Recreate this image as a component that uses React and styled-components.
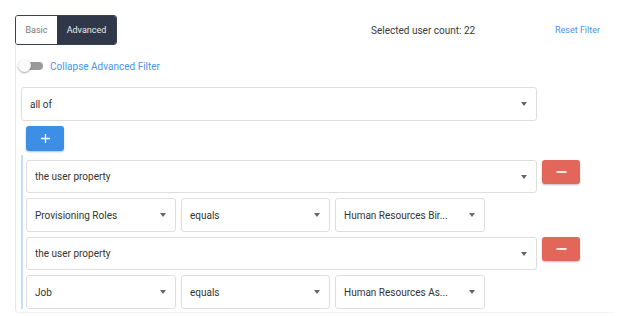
import styled, { createGlobalStyle } from "styled-components";

const Global = createGlobalStyle`
  body {
    margin: 0;
    background: #fff;
    font-family: Roboto, "Liberation Sans", Arial, sans-serif;
    color: #333;
  }
`;

export default function App() {
  const conditions = [
    { field: "Provisioning Roles", op: "equals", value: "Human Resources Bir..." },
    { field: "Job", op: "equals", value: "Human Resources As..." },
  ];

  return (
    <>
      <Global />
      <Page>
        <TopRow>
          <Tabs>
            <Tab>Basic</Tab>
            <Tab active>Advanced</Tab>
          </Tabs>
          <Count>Selected user count: 22</Count>
          <Link small>Reset Filter</Link>
        </TopRow>

        <Card>
          <ToggleRow>
            <Switch>
              <Thumb />
            </Switch>
            <Link>Collapse Advanced Filter</Link>
          </ToggleRow>

          <Select width={516} height={34}>
            <span>all of</span>
            <Caret />
          </Select>

          <AddButton>
            <svg width="11" height="11" viewBox="0 0 11 11">
              <path d="M5.5 1v9M1 5.5h9" stroke="#fff" strokeWidth="1.3" />
            </svg>
          </AddButton>

          <Group>
            {conditions.map((c, i) => (
              <Condition key={i}>
                <ConditionHead>
                  <Select width={511} height={33}>
                    <span>the user property</span>
                    <Caret />
                  </Select>
                  <RemoveButton>
                    <svg width="11" height="4" viewBox="0 0 11 4">
                      <path d="M0.5 2h10" stroke="#fde8e5" strokeWidth="2" />
                    </svg>
                  </RemoveButton>
                </ConditionHead>
                <SubRow>
                  <Select width={150} height={34}>
                    <span>{c.field}</span>
                    <Caret />
                  </Select>
                  <Select width={149} height={34}>
                    <span>{c.op}</span>
                    <Caret />
                  </Select>
                  <Select width={150} height={34}>
                    <span>{c.value}</span>
                    <Caret />
                  </Select>
                </SubRow>
              </Condition>
            ))}
          </Group>
        </Card>
      </Page>
    </>
  );
}

const Page = styled.div`
  width: 622px;
  padding: 15px 0 0 15px;
  box-sizing: border-box;
`;

const TopRow = styled.div`
  display: flex;
  align-items: center;
  height: 30px;
  padding-right: 22px;
`;

const Tabs = styled.div`
  display: flex;
  height: 30px;
  border: 1px solid #3a4150;
  border-radius: 3px;
  overflow: hidden;
  box-sizing: border-box;
`;

const Tab = styled.div`
  display: flex;
  align-items: center;
  justify-content: center;
  width: ${({ active }) => (active ? "59px" : "41px")};
  box-sizing: border-box;
  font-size: 9px;
  color: ${({ active }) => (active ? "#e8eaee" : "#777")};
  background: ${({ active }) => (active ? "#2f3748" : "#fff")};
`;

const Count = styled.div`
  margin-left: 254px;
  font-size: 10px;
  color: #3a3a3a;
`;

const Link = styled.div`
  color: #4a94e8;
  font-size: ${({ small }) => (small ? "9px" : "10px")};
  margin-left: ${({ small }) => (small ? "auto" : "0")};
`;

const Card = styled.div`
  border-left: 1px solid #e8e8e8;
  border-bottom: 1px solid #f2f2f2;
  border-bottom-left-radius: 4px;
  padding: 14px 0 3px 5px;
  width: 600px;
  box-sizing: border-box;
`;

const ToggleRow = styled.div`
  display: flex;
  align-items: center;
  gap: 7px;
  height: 14px;
  margin-bottom: 14px;
`;

const Switch = styled.div`
  position: relative;
  width: 22px;
  height: 8px;
  border-radius: 4px;
  background: #9a9a9a;
`;

const Thumb = styled.div`
  position: absolute;
  left: -3px;
  top: -3px;
  width: 13px;
  height: 13px;
  border-radius: 50%;
  background: #fafafa;
  box-shadow: 0 1px 2px rgba(0, 0, 0, 0.35);
`;

const Select = styled.div`
  display: flex;
  align-items: center;
  justify-content: space-between;
  width: ${({ width }) => width}px;
  height: ${({ height }) => height}px;
  box-sizing: border-box;
  padding: 0 9px 0 8px;
  border: 1px solid #dedede;
  border-radius: 3px;
  background: #fff;
  font-size: 10px;
  color: #333;
  flex-shrink: 0;
`;

const Caret = styled.span`
  width: 0;
  height: 0;
  border-left: 3.5px solid transparent;
  border-right: 3.5px solid transparent;
  border-top: 4px solid #666;
`;

const AddButton = styled.div`
  display: flex;
  align-items: center;
  justify-content: center;
  width: 38px;
  height: 25px;
  margin: 5px 0 0 5px;
  background: #3d8fe6;
  border-radius: 3px;
  box-shadow: 0 1px 2px rgba(0, 0, 0, 0.25);
`;

const RemoveButton = styled.div`
  display: flex;
  align-items: center;
  justify-content: center;
  width: 38px;
  height: 24px;
  background: #e3665a;
  border-radius: 3px;
  box-shadow: 0 1px 2px rgba(0, 0, 0, 0.25);
`;

const Group = styled.div`
  margin-top: 4px;
  border-left: 2px solid #c4e0f7;
  padding: 5px 0 0 3px;
  display: flex;
  flex-direction: column;
  gap: 5px;
`;

const Condition = styled.div`
  display: flex;
  flex-direction: column;
  gap: 5px;
`;

const ConditionHead = styled.div`
  display: flex;
  align-items: flex-start;
  gap: 5px;
`;

const SubRow = styled.div`
  display: flex;
  gap: 5px;
`;
